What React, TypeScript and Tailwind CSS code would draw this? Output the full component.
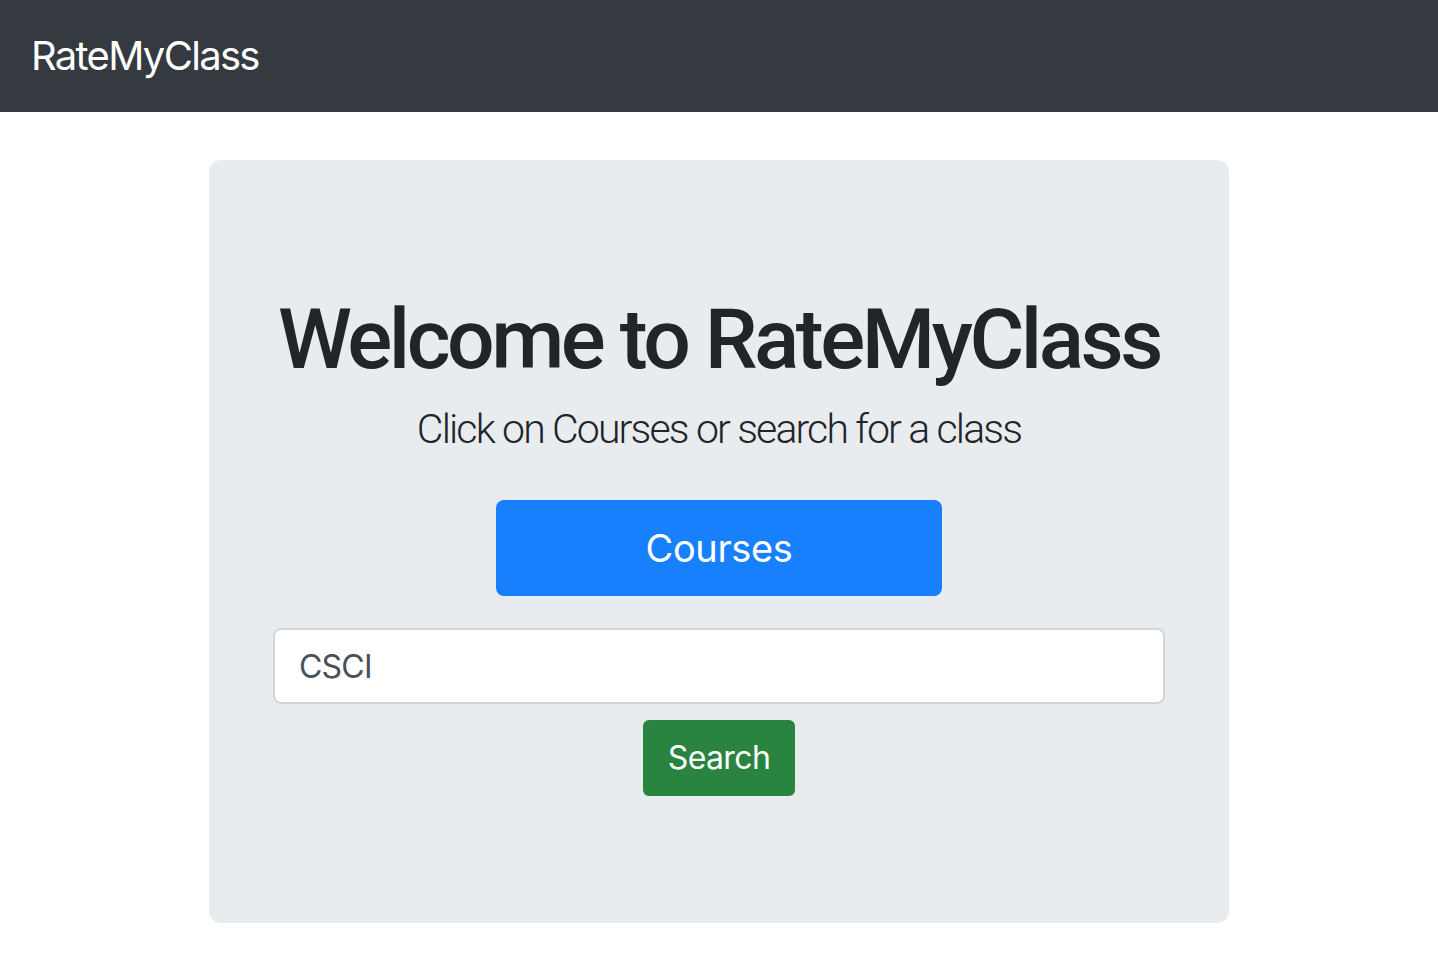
import React from 'react';

function Navbar() {
  return (
    <nav className="flex h-[112px] items-center bg-[#343a40] px-[31px]">
      <a href="#" className="text-[40px] leading-none text-white tracking-[-1.7px]">
        RateMyClass
      </a>
    </nav>
  );
}

function Jumbotron() {
  return (
    <div className="mx-auto mt-[48px] flex h-[763px] w-[1020px] flex-col items-center rounded-[12px] bg-[#e9ecef] pt-[130px]">
      <h1 className="font-['Roboto',sans-serif] text-[84px] font-medium leading-[100px] tracking-[-3.5px] text-[#212529]">
        Welcome to RateMyClass
      </h1>
      <p className="mt-[11px] font-['Roboto',sans-serif] text-[41px] font-light leading-[56px] tracking-[-1.85px] text-[#212529]">
        Click on Courses or search for a class
      </p>
      <button className="mt-[43px] flex h-[96px] w-[446px] items-center justify-center rounded-[8px] bg-[#1880fc] text-[38px] tracking-[-0.4px] text-white">
        Courses
      </button>
      <input
        className="mt-[32px] h-[76px] w-[892px] rounded-[8px] border-2 border-[#d3d7dc] bg-white px-[24px] text-[32px] tracking-[-0.8px] text-[#495057] outline-none"
        defaultValue="CSCI"
      />
      <button className="mt-[16px] flex h-[76px] w-[152px] items-center justify-center rounded-[6px] bg-[#28843f] text-[32px] tracking-[-0.6px] text-white">
        Search
      </button>
    </div>
  );
}

export default function App() {
  return (
    <div className="min-h-screen bg-white font-['Inter',sans-serif]">
      <Navbar />
      <Jumbotron />
    </div>
  );
}
